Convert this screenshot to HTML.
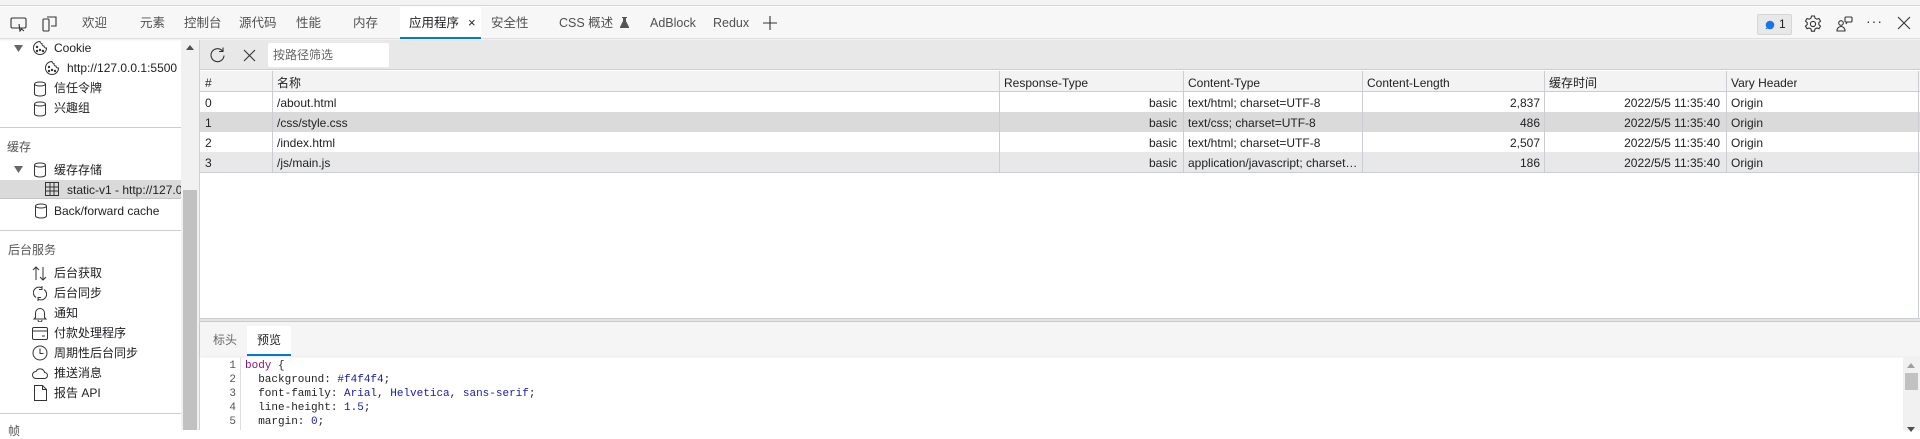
<!DOCTYPE html>
<html><head><meta charset="utf-8"><style>
*{box-sizing:border-box;margin:0;padding:0}
body{width:1920px;height:430px;overflow:hidden;background:#fff;font-family:"Liberation Sans","Noto Sans CJK SC",sans-serif;font-size:12px;color:#202124;position:relative}
.a{position:absolute;white-space:nowrap;line-height:16px;margin-top:-1px}
.tab{position:absolute;top:16px;color:#505050;font-size:12.5px;line-height:16px;margin-top:-1px;white-space:nowrap}
.side{color:#202124}
.hl{position:absolute;height:1px;background:#cacdd1;margin-top:0}
.vl{position:absolute;width:1px;background:#cacdd1}
.cell{position:absolute;white-space:nowrap;overflow:hidden;font-size:12px;line-height:16px;margin-top:-1px}
.mono{font-family:"Liberation Mono",monospace;font-size:11px}
.bx{position:absolute;margin:0}
svg{position:absolute}
</style></head><body>
<div class="bx" style="left:0;top:0;width:1920px;height:6px;background:#f3f3f3;border-bottom:1px solid #d6d6d6"></div>
<div class="bx" style="left:0;top:7px;width:1920px;height:32px;background:#f7f7f7;border-bottom:1px solid #e0e0e0;box-shadow:0 1px 2px rgba(0,0,0,.08)"></div>
<svg style="left:10px;top:16px" width="18" height="16" viewBox="0 0 18 16" fill="none" stroke="#333" stroke-width="1.1"><rect x="1" y="2" width="15" height="10" rx="1.5"/><path d="M9 8l1 7 1.5-2 2.5 2"/></svg>
<svg style="left:42px;top:15px" width="16" height="18" viewBox="0 0 16 18" fill="none" stroke="#333" stroke-width="1.1"><rect x="1" y="4" width="6" height="12" rx="1"/><path d="M5 2h9v9h-5"/></svg>
<div class="tab" style="left:82px">欢迎</div>
<div class="tab" style="left:140px">元素</div>
<div class="tab" style="left:184px">控制台</div>
<div class="tab" style="left:239px">源代码</div>
<div class="tab" style="left:296px">性能</div>
<div class="tab" style="left:353px">内存</div>
<div class="bx" style="left:400px;top:7px;width:81px;height:32px;background:#fff;border-bottom:2px solid #0078d4"></div>
<div class="tab" style="left:409px;color:#202124">应用程序</div>
<div class="tab" style="left:468px;color:#202124;font-size:13px">×</div>
<div class="tab" style="left:491px">安全性</div>
<div class="tab" style="left:559px">CSS 概述</div>
<svg style="left:620px;top:17px" width="9" height="11" viewBox="0 0 9 11"><path d="M2 0h5v1h-1v3l3 6v1H0v-1l3-6V1H2z" fill="#555"/></svg>
<div class="tab" style="left:650px">AdBlock</div>
<div class="tab" style="left:713px">Redux</div>
<svg style="left:762px;top:15px" width="16" height="16" viewBox="0 0 16 16" stroke="#333" stroke-width="1.1"><path d="M8 1v14M1 8h14"/></svg>
<div class="bx" style="left:1757px;top:14px;width:35px;height:21px;background:#e8e8e8;border:1px solid #d6d6d6;border-radius:2px"></div>
<svg style="left:1765px;top:20px" width="10" height="10" viewBox="0 0 10 10"><circle cx="5" cy="5" r="4.3" fill="#1a73e8"/><path d="M1 9l2-2" stroke="#1a73e8"/></svg>
<div class="a" style="left:1779px;top:17px;font-size:12px">1</div>
<svg style="left:1803px;top:14px" width="20" height="20" viewBox="0 0 20 20" fill="none" stroke="#333" stroke-width="1.1"><circle cx="10" cy="10" r="2.6"/><path d="M8.5 2h3l.5 2.2 1.8 1 2.2-.7 1.5 2.6-1.7 1.5v2l1.7 1.5-1.5 2.6-2.2-.7-1.8 1-.5 2.2h-3l-.5-2.2-1.8-1-2.2.7-1.5-2.6 1.7-1.5v-2L2.5 7.1 4 4.5l2.2.7 1.8-1z"/></svg>
<svg style="left:1835px;top:14px" width="20" height="20" viewBox="0 0 20 20" fill="none" stroke="#333" stroke-width="1.1"><circle cx="6" cy="9" r="2.3"/><path d="M2 17c0-3 2-4.5 4-4.5s4 1.5 4 4.5z"/><rect x="10" y="3" width="7" height="5" rx="1"/><path d="M12 8l-1 2"/></svg>
<div class="a" style="left:1866px;top:14px;font-size:14px;letter-spacing:1px;color:#333">···</div>
<svg style="left:1897px;top:16px" width="14" height="14" viewBox="0 0 14 14" stroke="#333" stroke-width="1.1"><path d="M1 1l12 12M13 1L1 13"/></svg>

<svg style="left:14px;top:45px" width="9" height="7" viewBox="0 0 9 7"><path d="M0 0h9L4.5 7z" fill="#666"/></svg>
<svg style="left:32px;top:40px" width="16" height="16" viewBox="0 0 16 16" fill="none" stroke="#333" stroke-width="1"><path d="M8 1.5a6.5 6.5 0 1 0 6.5 6.5 2 2 0 0 1-2.5-2 2 2 0 0 1-2-2.5A2 2 0 0 1 8 1.5z"/><circle cx="5" cy="7" r=".7" fill="#333"/><circle cx="8" cy="10" r=".7" fill="#333"/><circle cx="5" cy="11" r=".7" fill="#333"/><circle cx="11" cy="11" r=".7" fill="#333"/></svg>
<div class="a side" style="left:54px;top:41px">Cookie</div>
<svg style="left:44px;top:60px" width="16" height="16" viewBox="0 0 16 16" fill="none" stroke="#333" stroke-width="1"><path d="M8 1.5a6.5 6.5 0 1 0 6.5 6.5 2 2 0 0 1-2.5-2 2 2 0 0 1-2-2.5A2 2 0 0 1 8 1.5z"/><circle cx="5" cy="7" r=".7" fill="#333"/><circle cx="8" cy="10" r=".7" fill="#333"/><circle cx="5" cy="11" r=".7" fill="#333"/><circle cx="11" cy="11" r=".7" fill="#333"/></svg>
<div class="a side" style="left:67px;top:61px">http://127.0.0.1:5500</div>
<svg style="left:33px;top:81px" width="14" height="16" viewBox="0 0 14 16" fill="none" stroke="#333" stroke-width="1"><ellipse cx="7" cy="3" rx="5.5" ry="2"/><path d="M1.5 3v10c0 1 2.5 2 5.5 2s5.5-1 5.5-2V3"/></svg>
<div class="a side" style="left:54px;top:81px">信任令牌</div>
<svg style="left:33px;top:101px" width="14" height="16" viewBox="0 0 14 16" fill="none" stroke="#333" stroke-width="1"><ellipse cx="7" cy="3" rx="5.5" ry="2"/><path d="M1.5 3v10c0 1 2.5 2 5.5 2s5.5-1 5.5-2V3"/></svg>
<div class="a side" style="left:54px;top:101px">兴趣组</div>
<div class="hl" style="left:0;top:127px;width:181px"></div>
<div class="a" style="left:7px;top:140px;color:#555">缓存</div>
<svg style="left:14px;top:166px" width="9" height="7" viewBox="0 0 9 7"><path d="M0 0h9L4.5 7z" fill="#666"/></svg>
<svg style="left:33px;top:162px" width="14" height="16" viewBox="0 0 14 16" fill="none" stroke="#333" stroke-width="1"><ellipse cx="7" cy="3" rx="5.5" ry="2"/><path d="M1.5 3v10c0 1 2.5 2 5.5 2s5.5-1 5.5-2V3"/></svg>
<div class="a side" style="left:54px;top:163px">缓存存储</div>
<div class="bx" style="left:0;top:180px;width:181px;height:19px;background:#dadada;border-bottom:1px solid #c4c4c4"></div>
<svg style="left:45px;top:182px" width="14" height="14" viewBox="0 0 14 14" fill="none" stroke="#333" stroke-width="1"><rect x=".5" y=".5" width="13" height="13"/><path d="M.5 5h13M.5 9h13M5 .5v13M9 .5v13"/></svg>
<div class="a side" style="left:67px;top:183px;width:114px;overflow:hidden">static-v1 - http://127.0.0.1</div>
<svg style="left:34px;top:203px" width="14" height="16" viewBox="0 0 14 16" fill="none" stroke="#333" stroke-width="1"><ellipse cx="7" cy="3" rx="5.5" ry="2"/><path d="M1.5 3v10c0 1 2.5 2 5.5 2s5.5-1 5.5-2V3"/></svg>
<div class="a side" style="left:54px;top:204px">Back/forward cache</div>
<div class="hl" style="left:0;top:230px;width:181px"></div>
<div class="a" style="left:8px;top:243px;color:#555">后台服务</div>
<svg style="left:32px;top:266px" width="16" height="15" viewBox="0 0 16 15" fill="none" stroke="#333" stroke-width="1"><path d="M4 14V1M1 4l3-3 3 3M11 1v13M8 11l3 3 3-3"/></svg>
<div class="a side" style="left:54px;top:266px">后台获取</div>
<svg style="left:33px;top:286px" width="14" height="15" viewBox="0 0 14 15" fill="none" stroke="#333" stroke-width="1"><path d="M11 3.5A5.5 5.5 0 0 1 5 13M3 11.5A5.5 5.5 0 0 1 9 2M9 0v3.5h-3M5 15v-3.5h3"/></svg>
<div class="a side" style="left:54px;top:286px">后台同步</div>
<svg style="left:33px;top:306px" width="14" height="16" viewBox="0 0 14 16" fill="none" stroke="#333" stroke-width="1"><path d="M2.5 11.5V7a4.5 4.5 0 0 1 9 0v4.5l1.5 1.5H1zM5 14a2 2 0 0 0 4 0"/></svg>
<div class="a side" style="left:54px;top:306px">通知</div>
<svg style="left:32px;top:327px" width="16" height="13" viewBox="0 0 16 13" fill="none" stroke="#333" stroke-width="1"><rect x=".5" y=".5" width="15" height="12" rx="1.5"/><path d="M.5 4h15M10 9h3"/></svg>
<div class="a side" style="left:54px;top:326px">付款处理程序</div>
<svg style="left:32px;top:345px" width="16" height="16" viewBox="0 0 16 16" fill="none" stroke="#333" stroke-width="1"><circle cx="8" cy="8" r="7"/><path d="M8 3.5V8.5h3.5"/></svg>
<div class="a side" style="left:54px;top:346px">周期性后台同步</div>
<svg style="left:32px;top:367px" width="16" height="12" viewBox="0 0 16 12" fill="none" stroke="#333" stroke-width="1"><path d="M4 11.5h8.5a3 3 0 0 0 0-6 4.5 4.5 0 0 0-8.5-1A3.5 3.5 0 0 0 4 11.5z"/></svg>
<div class="a side" style="left:54px;top:366px">推送消息</div>
<svg style="left:34px;top:385px" width="13" height="16" viewBox="0 0 13 16" fill="none" stroke="#333" stroke-width="1"><path d="M.5 .5h8l4 4v11H.5zM8.5 .5v4h4"/></svg>
<div class="a side" style="left:54px;top:386px">报告 API</div>
<div class="hl" style="left:0;top:413px;width:181px"></div>
<div class="a" style="left:8px;top:424px;color:#555">帧</div>
<div class="bx" style="left:181px;top:40px;width:19px;height:390px;background:#f1f1f1"></div>
<svg style="left:186px;top:45px" width="8" height="5" viewBox="0 0 8 5"><path d="M0 5L4 0l4 5z" fill="#505050"/></svg>
<div class="bx" style="left:183px;top:190px;width:14px;height:240px;background:#c1c1c1"></div>
<div class="vl" style="left:199px;top:40px;height:390px;background:#d0d0d0"></div>

<div class="bx" style="left:200px;top:40px;width:1720px;height:30px;background:#e8e8e8;border-bottom:1px solid #cacdd1"></div>
<svg style="left:209px;top:47px" width="17" height="17" viewBox="0 0 17 17" fill="none" stroke="#333" stroke-width="1.1"><path d="M13.5 4A6.5 6.5 0 1 0 15 8.5M14 .5V4.5h-4"/></svg>
<svg style="left:243px;top:49px" width="13" height="13" viewBox="0 0 13 13" stroke="#333" stroke-width="1.1"><path d="M1 1l11 11M12 1L1 12"/></svg>
<div class="bx" style="left:268px;top:43px;width:121px;height:24px;background:#fff;border-radius:2px"></div>
<div class="a" style="left:273px;top:48px;color:#666">按路径筛选</div>

<div class="bx" style="left:200px;top:71px;width:1720px;height:21px;background:#f3f3f3;border-bottom:1px solid #cacdd1"></div>
<div class="bx" style="left:200px;top:112px;width:1720px;height:20px;background:#dadada"></div>
<div class="bx" style="left:200px;top:152px;width:1720px;height:20px;background:#e8e8e8"></div>
<div class="hl" style="left:200px;top:172px;width:1720px"></div>
<div class="vl" style="left:272px;top:71px;height:101px"></div>
<div class="vl" style="left:999px;top:71px;height:101px"></div>
<div class="vl" style="left:1183px;top:71px;height:101px"></div>
<div class="vl" style="left:1362px;top:71px;height:101px"></div>
<div class="vl" style="left:1544px;top:71px;height:101px"></div>
<div class="vl" style="left:1726px;top:71px;height:101px"></div>
<div class="vl" style="left:1918px;top:71px;height:248px"></div>
<div class="cell" style="left:205px;top:76px">#</div>
<div class="cell" style="left:277px;top:76px">名称</div>
<div class="cell" style="left:1004px;top:76px">Response-Type</div>
<div class="cell" style="left:1188px;top:76px">Content-Type</div>
<div class="cell" style="left:1367px;top:76px">Content-Length</div>
<div class="cell" style="left:1549px;top:76px">缓存时间</div>
<div class="cell" style="left:1731px;top:76px">Vary Header</div>

<div class="cell" style="left:205px;top:96px">0</div><div class="cell" style="left:277px;top:96px">/about.html</div><div class="cell" style="left:1004px;top:96px;width:173px;text-align:right">basic</div><div class="cell" style="left:1188px;top:96px;width:170px">text/html; charset=UTF-8</div><div class="cell" style="left:1367px;top:96px;width:173px;text-align:right">2,837</div><div class="cell" style="left:1549px;top:96px;width:171px;text-align:right">2022/5/5 11:35:40</div><div class="cell" style="left:1731px;top:96px">Origin</div>
<div class="cell" style="left:205px;top:116px">1</div><div class="cell" style="left:277px;top:116px">/css/style.css</div><div class="cell" style="left:1004px;top:116px;width:173px;text-align:right">basic</div><div class="cell" style="left:1188px;top:116px;width:170px">text/css; charset=UTF-8</div><div class="cell" style="left:1367px;top:116px;width:173px;text-align:right">486</div><div class="cell" style="left:1549px;top:116px;width:171px;text-align:right">2022/5/5 11:35:40</div><div class="cell" style="left:1731px;top:116px">Origin</div>
<div class="cell" style="left:205px;top:136px">2</div><div class="cell" style="left:277px;top:136px">/index.html</div><div class="cell" style="left:1004px;top:136px;width:173px;text-align:right">basic</div><div class="cell" style="left:1188px;top:136px;width:170px">text/html; charset=UTF-8</div><div class="cell" style="left:1367px;top:136px;width:173px;text-align:right">2,507</div><div class="cell" style="left:1549px;top:136px;width:171px;text-align:right">2022/5/5 11:35:40</div><div class="cell" style="left:1731px;top:136px">Origin</div>
<div class="cell" style="left:205px;top:156px">3</div><div class="cell" style="left:277px;top:156px">/js/main.js</div><div class="cell" style="left:1004px;top:156px;width:173px;text-align:right">basic</div><div class="cell" style="left:1188px;top:156px;width:170px">application/javascript; charset…</div><div class="cell" style="left:1367px;top:156px;width:173px;text-align:right">186</div><div class="cell" style="left:1549px;top:156px;width:171px;text-align:right">2022/5/5 11:35:40</div><div class="cell" style="left:1731px;top:156px">Origin</div>

<div class="bx" style="left:200px;top:318px;width:1720px;height:4px;background:#e4e4e4;border-top:1px solid #cacdd1;border-bottom:1px solid #cacdd1"></div>
<div class="bx" style="left:200px;top:322px;width:1720px;height:34px;background:#f5f5f5;box-shadow:0 1px 2px rgba(0,0,0,.1)"></div>
<div class="bx" style="left:247px;top:326px;width:44px;height:30px;background:#fff;border-bottom:2px solid #0078d4"></div>
<div class="a" style="left:213px;top:333px;color:#666">标头</div>
<div class="a" style="left:257px;top:333px;color:#202124">预览</div>
<div class="vl" style="left:240px;top:357px;height:73px;background:#ddd"></div>
<div class="a mono" style="left:200px;top:360px;width:36px;text-align:right;line-height:14px;color:#555">1<br>2<br>3<br>4<br>5</div>
<div class="a mono" style="left:245px;top:360px;line-height:14px;color:#222;white-space:pre"><span style="color:#881280">body</span> {
  background: <span style="color:#1a1aa6">#f4f4f4</span>;
  font-family: <span style="color:#1a1aa6">Arial</span>, <span style="color:#1a1aa6">Helvetica</span>, <span style="color:#1a1aa6">sans-serif</span>;
  line-height: <span style="color:#1a1aa6">1.5</span>;
  margin: <span style="color:#1a1aa6">0</span>;</div>
<div class="bx" style="left:1903px;top:356px;width:17px;height:74px;background:#f1f1f1"></div>
<svg style="left:1907px;top:363px" width="8" height="5" viewBox="0 0 8 5"><path d="M0 5L4 0l4 5z" fill="#a0a0a0"/></svg>
<div class="bx" style="left:1905px;top:373px;width:13px;height:17px;background:#c1c1c1"></div>
<svg style="left:1907px;top:427px" width="8" height="5" viewBox="0 0 8 5"><path d="M0 0h8L4 5z" fill="#505050"/></svg>
</body></html>
